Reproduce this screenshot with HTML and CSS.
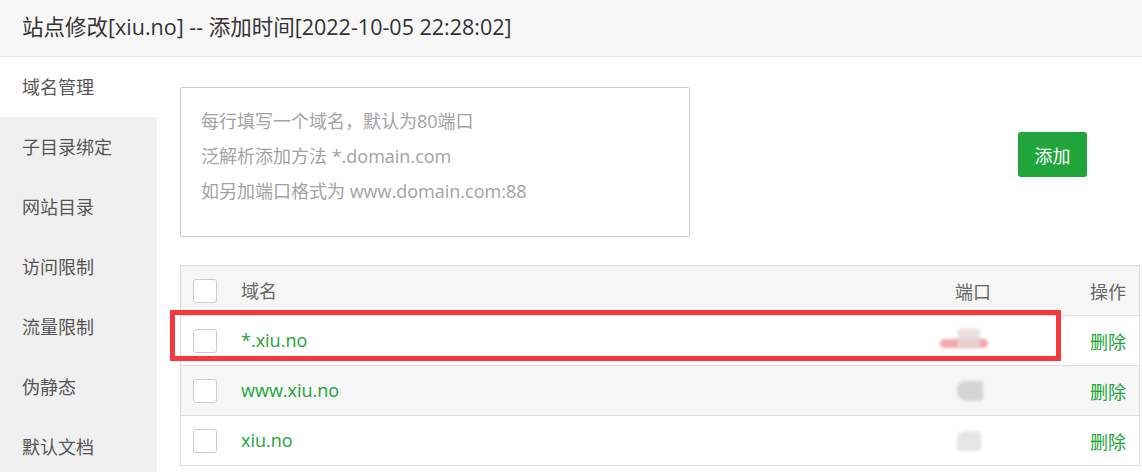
FILE: index.html
```html
<!DOCTYPE html>
<html lang="zh-CN">
<head>
<meta charset="utf-8">
<title>站点修改</title>
<link rel="stylesheet" href="styles.css">
</head>
<body>
<div class="page">
  <div class="title-bar">站点修改[xiu.no] -- 添加时间[2022-10-05 22:28:02]</div>
  <div class="body">
    <ul class="side">
      <li class="side-item active">域名管理</li>
      <li class="side-item">子目录绑定</li>
      <li class="side-item">网站目录</li>
      <li class="side-item">访问限制</li>
      <li class="side-item">流量限制</li>
      <li class="side-item">伪静态</li>
      <li class="side-item">默认文档</li>
    </ul>
    <div class="main">
      <div class="add-row">
        <div class="domain-input">
          <div class="ph">每行填写一个域名，默认为80端口</div>
          <div class="ph">泛解析添加方法 *.domain.com</div>
          <div class="ph">如另加端口格式为 www.domain.com:88</div>
        </div>
        <button class="btn-add">添加</button>
      </div>
      <div class="table-wrap">
        <div class="row head">
          <div class="cell c-check"><span class="checkbox"></span></div>
          <div class="cell c-name">域名</div>
          <div class="cell c-port">端口</div>
          <div class="cell c-op">操作</div>
        </div>
        <div class="row">
          <div class="cell c-check"><span class="checkbox"></span></div>
          <div class="cell c-name link">*.xiu.no</div>
          <div class="cell c-port"><span class="blur blur-pink"><span class="blur-sq"></span></span></div>
          <div class="cell c-op link">删除</div>
        </div>
        <div class="row alt">
          <div class="cell c-check"><span class="checkbox"></span></div>
          <div class="cell c-name link">www.xiu.no</div>
          <div class="cell c-port"><span class="blur blur-gray"></span></div>
          <div class="cell c-op link">删除</div>
        </div>
        <div class="row">
          <div class="cell c-check"><span class="checkbox"></span></div>
          <div class="cell c-name link">xiu.no</div>
          <div class="cell c-port"><span class="blur blur-light"></span></div>
          <div class="cell c-op link">删除</div>
        </div>
        <div class="highlight"></div>
      </div>
    </div>
  </div>
</div>
</body>
</html>
```

FILE: styles.css
```css
* { box-sizing: border-box; }
html, body {
  margin: 0;
  padding: 0;
  background: #fff;
}
body {
  font-family: "Open Sans", "Noto Sans CJK SC", sans-serif;
  color: #333;
  overflow: hidden;
  width: 1142px;
  height: 472px;
}
.page {
  display: flex;
  flex-direction: column;
  height: 472px;
}
.title-bar {
  height: 57px;
  background: #f7f7f7;
  border-bottom: 1px solid #e6e6e6;
  padding-left: 22px;
  font-size: 21.5px;
  line-height: 54px;
  color: #333;
  flex: none;
}
.body {
  flex: 1;
  display: flex;
  min-height: 0;
}
.side {
  list-style: none;
  margin: 0;
  padding: 0;
  width: 157px;
  flex: none;
  background: #f0f0f0;
}
.side-item {
  height: 60px;
  line-height: 60px;
  padding-left: 22px;
  font-size: 18px;
  color: #555;
}
.side-item.active {
  background: #fff;
}
.main {
  flex: 1;
  padding: 30px 2px 0 23px;
}
.add-row {
  display: flex;
  align-items: flex-start;
}
.domain-input {
  width: 510px;
  height: 150px;
  border: 1px solid #ccc;
  border-radius: 2px;
  padding: 16px 20px;
}
.ph {
  font-size: 18px;
  line-height: 35px;
  color: #a3a3a3;
  white-space: nowrap;
}
.btn-add {
  margin: 45px 0 0 328px;
  width: 69px;
  height: 45px;
  background: #20a53a;
  color: #fff;
  border: none;
  border-radius: 3px;
  font-family: "Noto Sans CJK SC", sans-serif;
  font-size: 18px;
  padding: 0;
}
.table-wrap {
  position: relative;
  margin-top: 28px;
  width: 960px;
  border: 1px solid #ddd;
}
.row {
  display: grid;
  grid-template-columns: 60px 1fr 130px 79px;
  height: 50px;
  align-items: center;
  border-top: 1px solid #ddd;
  background: #fff;
}
.row.head {
  border-top: none;
  height: 49px;
  background: #f6f6f6;
}
.row.alt {
  background: #f6f6f6;
}
.cell {
  font-size: 18px;
  color: #666;
  white-space: nowrap;
}
.c-name {
  padding-bottom: 1px;
}
.c-check {
  padding-left: 12px;
  display: flex;
  align-items: center;
}
.checkbox {
  width: 24px;
  height: 24px;
  border: 1px solid #ccc;
  border-radius: 3px;
  background: #fff;
}
.c-port {
  padding-left: 25px;
  display: flex;
  align-items: center;
}
.c-op {
  text-align: right;
  padding-right: 13px;
}
.link {
  color: #20a53a;
}
.blur {
  position: relative;
  display: inline-block;
}
.blur-pink {
  width: 48px;
  height: 9px;
  margin: 6px 0 0 -15px;
  border-radius: 5px;
  background: #f0a9ae;
  filter: blur(1.5px);
}
.blur-sq {
  position: absolute;
  left: 18px;
  top: -10px;
  width: 22px;
  height: 20px;
  background: rgba(230, 215, 215, 0.8);
}
.blur-gray {
  width: 26px;
  height: 20px;
  margin: 0 0 0 2px;
  border-radius: 8px 2px 2px 10px;
  background: #d5d5d5;
  filter: blur(1.5px);
}
.blur-light {
  width: 24px;
  height: 20px;
  margin: 0 0 0 2px;
  border-radius: 8px 3px 3px 3px;
  background: #e6e6e6;
  filter: blur(1.5px);
}
.highlight {
  position: absolute;
  left: -11px;
  top: 44px;
  width: 891px;
  height: 51px;
  border: 5px solid #f4383c;
}
```
